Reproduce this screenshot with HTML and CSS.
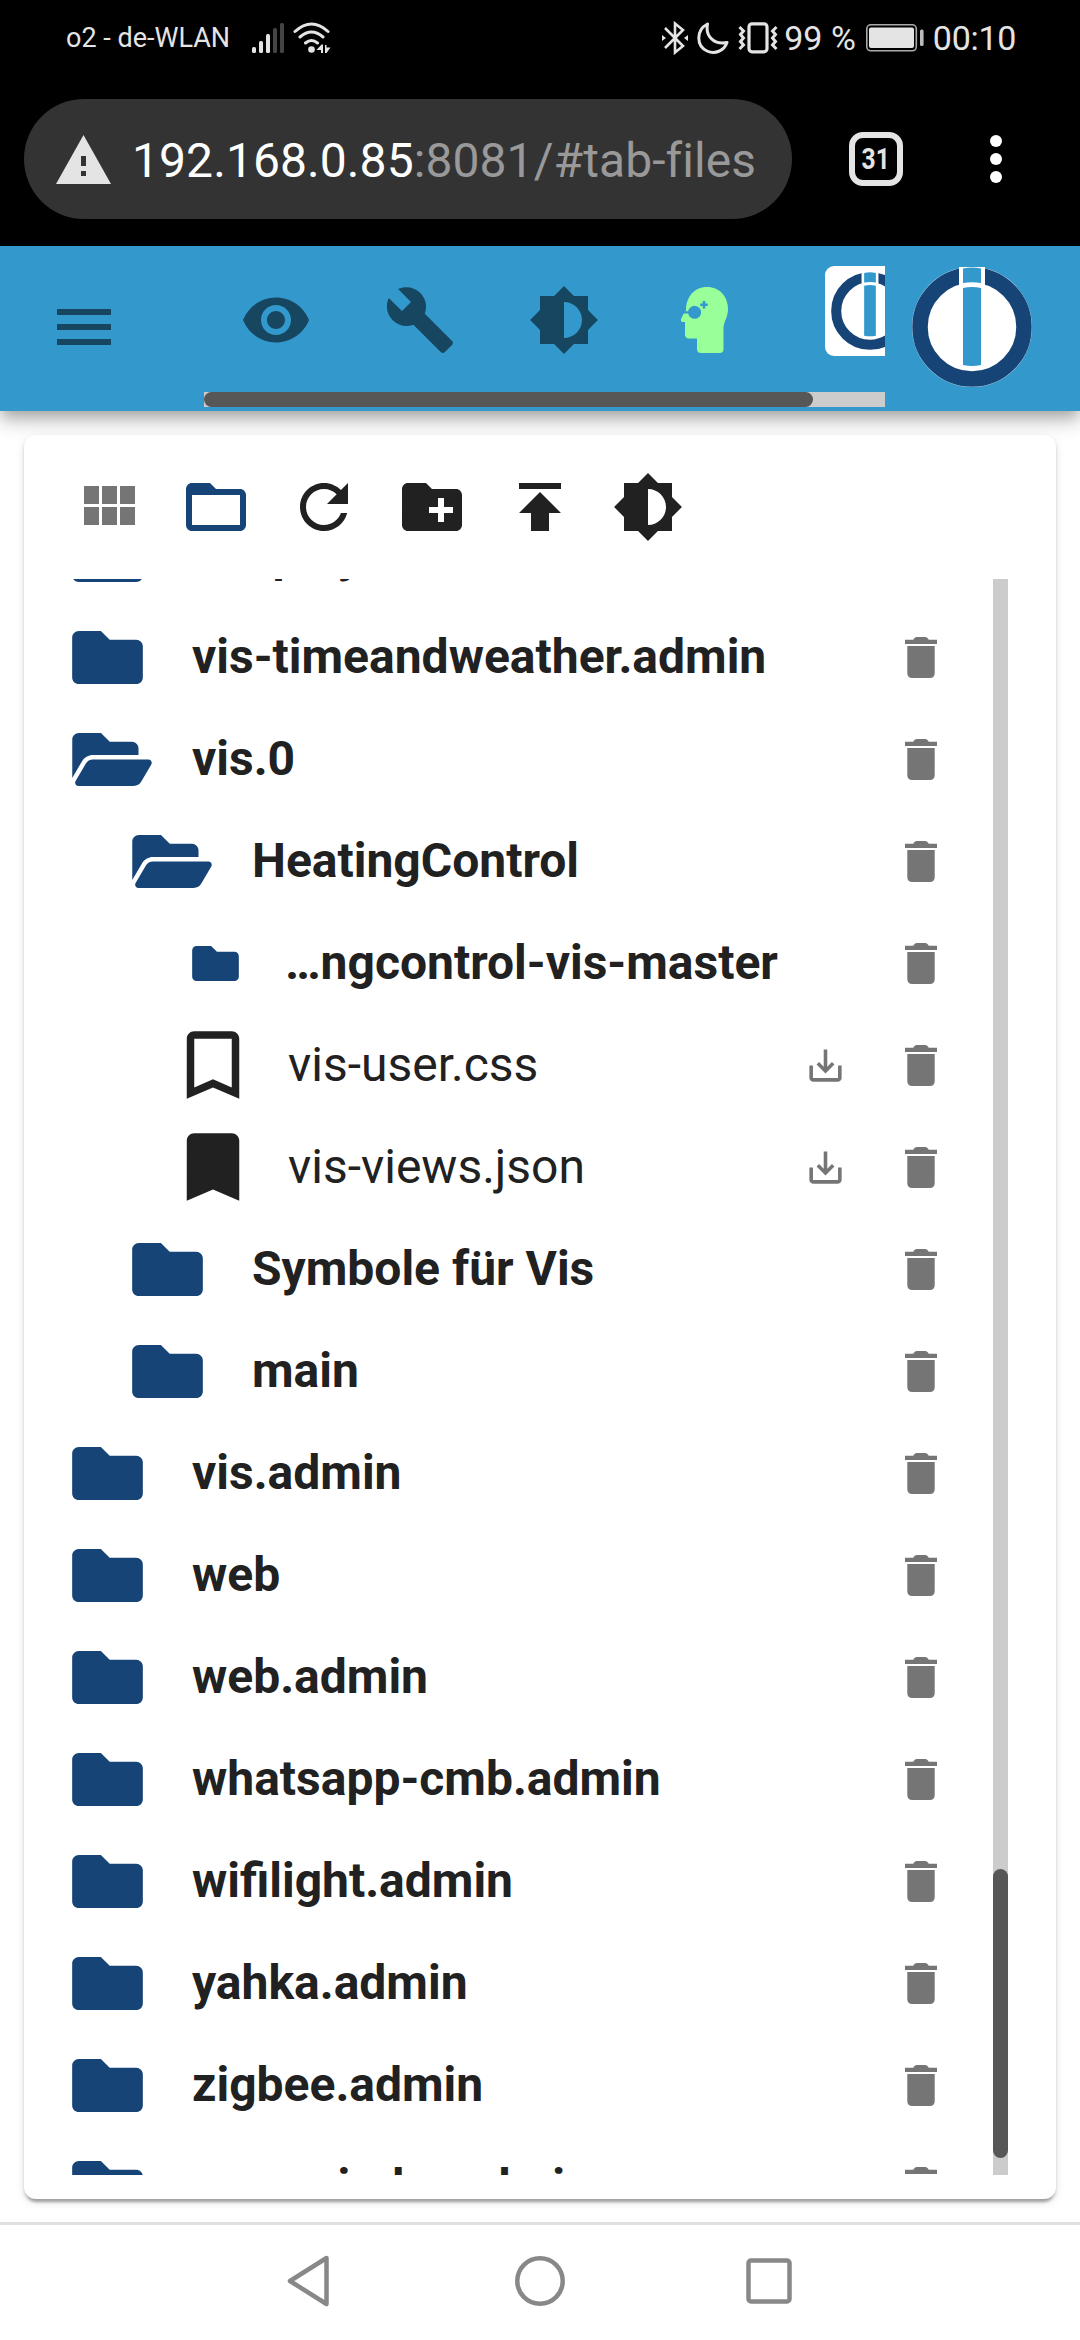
FILE: index.html
```html
<!DOCTYPE html>
<html lang="de">
<head>
    <meta charset="UTF-8">
    <meta name="viewport" content="width=device-width, initial-scale=1.0">
    <title>ioBroker.admin</title>
    <link rel="stylesheet" href="styles.css">
</head>
<body>

    <!-- Icons -->
    <svg class="sprite">
        <symbol id="folder" viewBox="0 64 512 384"><path d="M464 128H272l-64-64H48C21.49 64 0 85.49 0 112v288c0 26.51 21.49 48 48 48h416c26.51 0 48-21.49 48-48V176c0-26.51-21.49-48-48-48z"/></symbol>
        <symbol id="folder-open" viewBox="0 64 576 384"><path d="M572.694 292.093L500.27 416.248A63.997 63.997 0 0 1 444.989 448H45.025c-18.523 0-30.064-20.093-20.731-36.093l72.424-124.155A64 64 0 0 1 152 256h399.964c18.523 0 30.064 20.093 20.73 36.093zM152 224h328v-48c0-26.51-21.49-48-48-48H272l-64-64H48C21.49 64 0 85.49 0 112v278.046l69.077-118.418C86.214 242.25 117.989 224 152 224z"/></symbol>
        <symbol id="trash" viewBox="0 0 32 41"><path d="M0 2.700h8.200Q9.600 0 11.500 0h9Q22.400 0 23.800 2.700H32V7H0zM2.300 9h27.400v27q0 5-5 5H7.300q-5 0-5-5z"/></symbol>
        <symbol id="download" viewBox="0 0 24 24"><path d="M19 12v7H5v-7H3v7c0 1.100.9 2 2 2h14c1.100 0 2-.9 2-2v-7h-2zm-6 .67l2.590-2.580L17 11.500l-5 5-5-5 1.410-1.410L11 12.670V3h2z"/></symbol>
        <symbol id="brightness" viewBox="0 0 24 24"><path d="M20 15.310L23.310 12 20 8.690V4h-4.690L12 .69 8.690 4H4v4.690L.69 12 4 15.310V20h4.690L12 23.310 15.310 20H20v-4.690zM12 18V6c3.310 0 6 2.690 6 6s-2.690 6-6 6z"/></symbol>
        <symbol id="logo" viewBox="0 0 120 120">
            <circle cx="60" cy="60" r="60" fill="#fff"/>
            <circle cx="60" cy="60" r="52" fill="none" stroke="#164477" stroke-width="15.500"/>
            <path fill="#fff" d="M47 0h26v24H47z"/>
            <path fill="#39c" d="M51 1.500q9-2 18 0V16q-9-1.500-18 0zM51 21q9-2 18 0v77q-9 2-18 0z"/>
        </symbol>
    </svg>

    <div class="status-bar">
        <span class="carrier">o2 - de-WLAN</span>
        <svg class="signal" width="28" height="32" viewBox="0 0 28 32">
            <g fill="#e4e4e4">
                <rect y="25" width="4" height="6" rx="1.500"/>
                <rect x="7" y="19" width="4" height="12" rx="1.500"/>
                <rect x="14" y="12" width="4" height="19" rx="1.500"/>
            </g>
            <g fill="#444">
                <rect x="21" y="6" width="4" height="25" rx="1.500"/>
                <rect x="28" y="1" width="4" height="30" rx="1.500"/>
            </g>
        </svg>
        <svg class="wifi" width="38" height="32" viewBox="0 0 38 32">
            <g fill="none" stroke="#e4e4e4" stroke-width="3" stroke-linecap="round">
                <path d="M2 9.500q16.500-15 33 0M7 15q11.500-10 23 0M12.500 21q6-5 12 0"/>
            </g>
            <circle cx="18.500" cy="27.500" r="3.300" fill="#e4e4e4"/>
            <path fill="#e4e4e4" d="M23.500 28l5-5.500h1.500v8.500h-2v-3zM32 23h1.500v2.500h4L33.500 31H32z"/>
        </svg>
        <div class="status-right">
            <svg width="26" height="34" viewBox="0 0 26 34" fill="none" stroke="#e4e4e4" stroke-width="2.600">
                <path d="M3 7l18 18-8 6.500v-29L21 9 3 27"/>
                <path fill="#e4e4e4" stroke="none" d="M0 14l4 3-4 3zM26 14l-4 3 4 3z"/>
            </svg>
            <svg class="moon" width="32" height="32" viewBox="0 0 32 32">
                <path fill="none" stroke="#e4e4e4" stroke-width="3" stroke-linejoin="round" d="M10.500 2C-1 8-1 24 10 29c8 3.500 17 0 20-8.500C18 23 8 15 10.500 2z"/>
            </svg>
            <svg class="vibrate" width="40" height="32" viewBox="0 0 40 32" fill="none" stroke="#e4e4e4">
                <rect x="11" y="1.800" width="18" height="28" rx="3" stroke-width="3.200"/>
                <path stroke-width="3" d="M1.500 5l4 4-3 3.500 3 3.500-3 3.500 3 3.500-4 4M38.500 5l-4 4 3 3.500-3 3.500 3 3.500-3 3.500 4 4"/>
            </svg>
            <span class="percent">99 %</span>
            <svg class="battery" width="58" height="28" viewBox="0 0 58 28">
                <rect x=".8" y=".8" width="49.500" height="26" rx="4" fill="none" stroke="#aaa" stroke-width="1.600"/>
                <rect x="3" y="3.500" width="45" height="20.500" rx="2" fill="#e4e4e4"/>
                <rect x="54" y="5.500" width="3.600" height="16.500" rx="1.500" fill="#bbb"/>
            </svg>
            <span class="time">00:10</span>
        </div>
    </div>

    <div class="browser-bar">
        <div class="address">
            <svg width="55" height="49" viewBox="0 0 55 49"><path fill="#e4e4e4" fill-rule="evenodd" d="M27.500 0L55 49H0zM25 21v10h5V21zM25 36v5h5v-5z"/></svg>
            <div class="url">192.168.0.85<span>:8081/#tab-files</span></div>
        </div>
        <div class="tabs"><span>31</span></div>
        <div class="dots"><i></i><i></i><i></i></div>
    </div>

    <header class="app-bar">
        <svg class="menu" width="72" height="72" viewBox="0 0 24 24"><path d="M3 18h18v-2H3v2zm0-5h18v-2H3v2zm0-7v2h18V6H3z"/></svg>
        <div class="app-scroll">
            <div class="app-icons">
                <svg viewBox="0 0 24 24"><path d="M12 4.500C7 4.500 2.730 7.610 1 12c1.730 4.390 6 7.500 11 7.500s9.270-3.110 11-7.500c-1.730-4.390-6-7.500-11-7.500zM12 17c-2.760 0-5-2.240-5-5s2.240-5 5-5 5 2.240 5 5-2.240 5-5 5zm0-8c-1.660 0-3 1.340-3 3s1.340 3 3 3 3-1.340 3-3-1.340-3-3-3z"/></svg>
                <svg viewBox="0 0 24 24"><path d="M22.700 19l-9.100-9.100c.9-2.300.4-5-1.500-6.900-2-2-5-2.400-7.400-1.300L9 6 6 9 1.600 4.700C.4 7.100.9 10.100 2.900 12.100c1.900 1.900 4.600 2.400 6.900 1.500l9.100 9.100c.4.4 1 .4 1.400 0l2.300-2.300c.5-.4.5-1.100.1-1.400z"/></svg>
                <svg><use href="#brightness"/></svg>
                <svg class="expert" viewBox="0 0 72 72">
                    <path d="M14 27C14 13 22 3 35 3c13 0 21 10 21 22 0 9-4.500 12-4.500 20v20q0 4-4 4H29q-4 0-4-4V54.500h-8q-4 0-4-4V38h-3q-1.500-.5-1-3l4-8z"/>
                    <path fill="#39c" d="M11 27.200h5.200a6.500 6.500 0 1 1 0 2.300H11zM30.700 17v2.400h-2.500V22h2.500v2.500h2.600V22h2.500v-2.600h-2.500V17z"/>
                </svg>
                <div class="host"><svg><use href="#logo"/></svg></div>
            </div>
            <div class="h-track"><div class="h-thumb"></div></div>
        </div>
        <svg class="logo"><use href="#logo"/></svg>
    </header>

    <main class="card">
        <div class="toolbar">
            <svg viewBox="0 0 24 24" class="grey"><path d="M4 11h5V5H4v6zm0 7h5v-6H4v6zm6 0h5v-6h-5v6zm6 0h5v-6h-5v6zm-6-7h5V5h-5v6zm6-6v6h5V5h-5z"/></svg>
            <svg viewBox="0 0 24 24" class="blue"><path d="M20 6h-8l-2-2H4c-1.100 0-1.990.9-1.990 2L2 18c0 1.100.9 2 2 2h16c1.100 0 2-.9 2-2V8c0-1.100-.9-2-2-2zm0 12H4V8h16v10z"/></svg>
            <svg viewBox="0 0 24 24"><path d="M17.650 6.350C16.200 4.900 14.210 4 12 4c-4.420 0-7.990 3.580-7.990 8s3.570 8 7.990 8c3.730 0 6.840-2.550 7.730-6h-2.080c-.82 2.330-3.040 4-5.650 4-3.310 0-6-2.690-6-6s2.690-6 6-6c1.660 0 3.140.69 4.220 1.780L13 11h7V4l-2.350 2.350z"/></svg>
            <svg viewBox="0 0 24 24"><path d="M20 6h-8l-2-2H4c-1.110 0-1.990.89-1.990 2L2 18c0 1.110.89 2 2 2h16c1.110 0 2-.89 2-2V8c0-1.110-.89-2-2-2zm-1 8h-3v3h-2v-3h-3v-2h3V9h2v3h3v2z"/></svg>
            <svg viewBox="0 0 24 24"><path d="M5 4v2h14V4H5zm0 10h4v6h6v-6h4l-7-7-7 7z"/></svg>
            <svg><use href="#brightness"/></svg>
        </div>
        <div class="files">
            <div class="tree">
                <div class="row"><svg class="folder"><use href="#folder"/></svg><span class="name">vis-players</span><svg class="trash"><use href="#trash"/></svg></div>
                <div class="row"><svg class="folder"><use href="#folder"/></svg><span class="name">vis-timeandweather.admin</span><svg class="trash"><use href="#trash"/></svg></div>
                <div class="row"><svg class="folder open"><use href="#folder-open"/></svg><span class="name">vis.0</span><svg class="trash"><use href="#trash"/></svg></div>
                <div class="row level-1"><svg class="folder open"><use href="#folder-open"/></svg><span class="name">HeatingControl</span><svg class="trash"><use href="#trash"/></svg></div>
                <div class="row level-2"><svg class="folder small"><use href="#folder"/></svg><span class="name">…ngcontrol-vis-master</span><svg class="trash"><use href="#trash"/></svg></div>
                <div class="row file"><svg class="mark" viewBox="0 0 24 24"><path d="M17 3H7c-1.100 0-1.990.9-1.990 2L5 21l7-3 7 3V5c0-1.100-.9-2-2-2zm0 15l-5-2.180L7 18V5h10v13z"/></svg><span class="name">vis-user.css</span><svg class="download"><use href="#download"/></svg><svg class="trash"><use href="#trash"/></svg></div>
                <div class="row file"><svg class="mark" viewBox="0 0 24 24"><path d="M17 3H7c-1.100 0-1.990.9-1.990 2L5 21l7-3 7 3V5c0-1.100-.9-2-2-2z"/></svg><span class="name">vis-views.json</span><svg class="download"><use href="#download"/></svg><svg class="trash"><use href="#trash"/></svg></div>
                <div class="row level-1"><svg class="folder"><use href="#folder"/></svg><span class="name">Symbole für Vis</span><svg class="trash"><use href="#trash"/></svg></div>
                <div class="row level-1"><svg class="folder"><use href="#folder"/></svg><span class="name">main</span><svg class="trash"><use href="#trash"/></svg></div>
                <div class="row"><svg class="folder"><use href="#folder"/></svg><span class="name">vis.admin</span><svg class="trash"><use href="#trash"/></svg></div>
                <div class="row"><svg class="folder"><use href="#folder"/></svg><span class="name">web</span><svg class="trash"><use href="#trash"/></svg></div>
                <div class="row"><svg class="folder"><use href="#folder"/></svg><span class="name">web.admin</span><svg class="trash"><use href="#trash"/></svg></div>
                <div class="row"><svg class="folder"><use href="#folder"/></svg><span class="name">whatsapp-cmb.admin</span><svg class="trash"><use href="#trash"/></svg></div>
                <div class="row"><svg class="folder"><use href="#folder"/></svg><span class="name">wifilight.admin</span><svg class="trash"><use href="#trash"/></svg></div>
                <div class="row"><svg class="folder"><use href="#folder"/></svg><span class="name">yahka.admin</span><svg class="trash"><use href="#trash"/></svg></div>
                <div class="row"><svg class="folder"><use href="#folder"/></svg><span class="name">zigbee.admin</span><svg class="trash"><use href="#trash"/></svg></div>
                <div class="row"><svg class="folder"><use href="#folder"/></svg><span class="name">zoneminder.admin</span><svg class="trash"><use href="#trash"/></svg></div>
            </div>
            <div class="v-track"><div class="v-thumb"></div></div>
        </div>
    </main>

    <nav class="nav-bar">
        <svg width="44" height="52" viewBox="0 0 44 52"><path d="M39.500 3L3 26l36.500 23z"/></svg>
        <svg width="50" height="50" viewBox="0 0 50 50"><circle cx="25" cy="25" r="22.700"/></svg>
        <svg width="46" height="46" viewBox="0 0 46 46"><rect x="2.500" y="2.500" width="41" height="41" rx="2.500"/></svg>
    </nav>

</body>
</html>
```
FILE: styles.css
```css
* {
    box-sizing: border-box;
    margin: 0;
    padding: 0;
}

body {
    width: 1080px;
    height: 2340px;
    overflow: hidden;
    display: flex;
    flex-direction: column;
    font-family: Roboto, sans-serif;
    background-color: #fff;
    color: #212121;
}

svg {
    display: block;
    flex-shrink: 0;
}

.sprite {
    display: none;
}

/* Status bar */
.status-bar {
    height: 75px;
    flex-shrink: 0;
    display: flex;
    align-items: center;
    padding: 0 64px 0 66px;
    background-color: #000;
    color: #e4e4e4;
    font-size: 34px;
}

.carrier {
    width: 186px;
    font-size: 27px;
    white-space: nowrap;
}

.signal {
    overflow: visible;
}

.wifi {
    margin-left: 13px;
}

.status-right {
    display: flex;
    align-items: center;
    margin-left: auto;
}

.moon {
    margin-left: 9px;
}

.vibrate {
    margin-left: 9px;
}

.percent {
    margin: 0 10px 0 6px;
    white-space: nowrap;
}

.battery {
    margin-right: 9px;
}

.time {
    letter-spacing: -0.3px;
}

/* Browser bar */
.browser-bar {
    height: 171px;
    flex-shrink: 0;
    display: flex;
    align-items: center;
    padding: 0 0 3px 24px;
    background-color: #000;
}

.address {
    width: 768px;
    height: 120px;
    border-radius: 60px;
    display: flex;
    align-items: center;
    padding-left: 32px;
    background-color: #333;
}

.url {
    margin-left: 21px;
    padding-top: 2px;
    font-size: 48px;
    letter-spacing: 0.08px;
    color: #fff;
    white-space: nowrap;
}

.url span {
    color: #999;
}

.tabs {
    width: 54px;
    height: 54px;
    margin-left: 57px;
    border: 6px solid #e4e4e4;
    border-radius: 14px;
    color: #e4e4e4;
    font-size: 29px;
    font-weight: 700;
    line-height: 42px;
    text-align: center;
}

.tabs span {
    display: inline-block;
    transform: scaleX(0.85);
}

.dots {
    display: flex;
    flex-direction: column;
    gap: 6px;
    margin-left: 87px;
}

.dots i {
    width: 12px;
    height: 12px;
    border-radius: 50%;
    background-color: #fff;
}

/* App bar */
.app-bar {
    height: 165px;
    flex-shrink: 0;
    display: flex;
    align-items: center;
    padding-bottom: 3px;
    background-color: #39c;
    box-shadow: 0 6px 12px -3px rgba(0, 0, 0, 0.2), 0 12px 15px rgba(0, 0, 0, 0.14), 0 3px 30px rgba(0, 0, 0, 0.12);
}

.menu {
    margin-left: 48px;
    fill: #174760;
}

.app-scroll {
    width: 681px;
    height: 160px;
    margin-left: 84px;
    overflow: hidden;
}

.app-icons {
    display: flex;
    align-items: center;
    gap: 72px;
    height: 145px;
    padding: 1px 0 0 36px;
}

.app-icons svg {
    width: 72px;
    height: 72px;
    fill: #174760;
}

.app-icons .expert {
    fill: #9f9;
}

.app-icons .host {
    width: 90px;
    height: 90px;
    flex-shrink: 0;
    display: flex;
    align-items: center;
    justify-content: center;
    margin: 0 0 18px 9px;
    border-radius: 9px;
    background-color: #fff;
}

.app-icons .host svg {
    width: 78px;
    height: 78px;
}

.h-track {
    height: 15px;
    background-color: #ccc;
}

.h-thumb {
    width: 609px;
    height: 15px;
    border-radius: 8px;
    background-color: #575757;
}

.logo {
    width: 120px;
    height: 120px;
    margin-left: 27px;
}

/* Files */
.card {
    position: relative;
    height: 1764px;
    flex-shrink: 0;
    margin: 24px 24px 0;
    padding: 36px 48px 24px 24px;
    border-radius: 12px;
    background-color: #fff;
    box-shadow: 0 6px 3px -3px rgba(0, 0, 0, 0.2), 0 3px 3px rgba(0, 0, 0, 0.14), 0 3px 9px rgba(0, 0, 0, 0.12);
}

.toolbar {
    display: flex;
    gap: 36px;
    height: 108px;
    padding-left: 24px;
}

.toolbar svg {
    width: 72px;
    height: 72px;
    fill: #212121;
}

.toolbar .grey {
    fill: #757575;
}

.toolbar .blue {
    fill: #164477;
}

.files {
    display: flex;
    height: 1596px;
    overflow: hidden;
}

.tree {
    flex: 1;
    margin-top: -75px;
}

.row {
    display: flex;
    align-items: center;
    height: 102px;
    padding: 0 56px 0 24px;
    font-size: 48px;
    font-weight: 700;
    white-space: nowrap;
}

.level-1 {
    padding-left: 84px;
}

.level-2 {
    padding-left: 144px;
}

.file {
    padding-left: 120px;
    font-weight: 400;
}

.folder {
    width: 71px;
    height: 53px;
    margin-right: 49px;
    fill: #164477;
}

.folder.open {
    width: 80px;
    margin-right: 40px;
}

.folder.small {
    width: 47px;
    height: 35px;
    margin-right: 46px;
}

.mark {
    width: 90px;
    height: 90px;
    margin-right: 30px;
    fill: #212121;
}

.name {
    flex: 1;
    padding-bottom: 2px;
}

.download {
    width: 43px;
    height: 43px;
    margin-right: 58px;
    fill: #757575;
}

.trash {
    width: 32px;
    height: 41px;
    fill: #757575;
}

.v-track {
    width: 15px;
    padding-top: 1290px;
    background-color: #ccc;
}

.v-thumb {
    height: 289px;
    border-radius: 8px;
    background-color: #575757;
}

/* Navigation bar */
.nav-bar {
    flex: 1;
    display: flex;
    align-items: center;
    margin-top: 23px;
    padding: 0 0 4px 287px;
    border-top: 3px solid #e0e0e0;
}

.nav-bar svg {
    margin-right: 184px;
    fill: none;
    stroke: #888;
    stroke-width: 4.500;
    stroke-linejoin: round;
}

.nav-bar svg + svg {
    margin-right: 181px;
}
```
